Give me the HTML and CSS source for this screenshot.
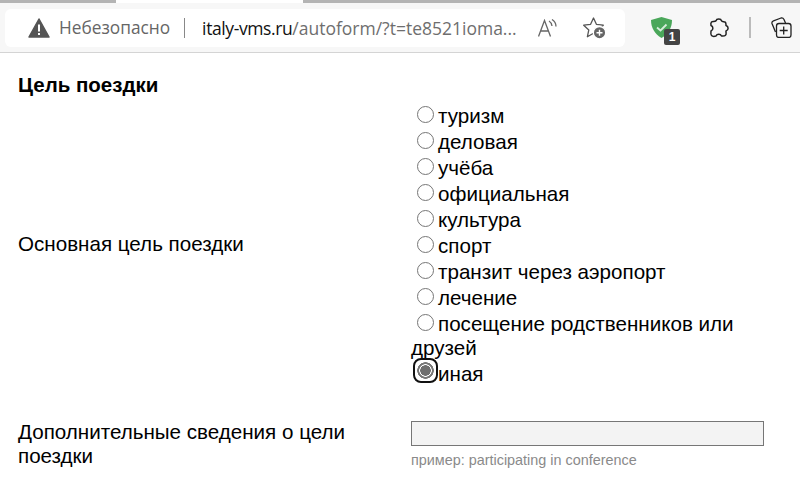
FILE: index.html
```html
<!DOCTYPE html>
<html lang="ru">
<head>
<meta charset="utf-8">
<title>Цель поездки</title>
<link rel="stylesheet" href="styles.css">
</head>
<body>
<header class="toolbar">
  <div class="tabstrip"><span class="tab tab-left"></span><span class="tab tab-right"></span></div>
  <div class="toolrow">
    <div class="address">
      <svg class="warn" width="22" height="20" viewBox="0 0 22 20"><path d="M11 1 L21 19 H1 Z" fill="#555" stroke="#555" stroke-width="1.5" stroke-linejoin="round"/><rect x="10" y="6.5" width="2" height="7" fill="#fff"/><rect x="10" y="15" width="2" height="2" fill="#fff"/></svg>
      <span class="insecure">Небезопасно</span>
      <span class="sep"></span>
      <span class="url"><b class="host">italy-vms.ru</b>/autoform/?t=te8521ioma...</span>
      <svg class="aloud" width="20" height="18" viewBox="0 0 20 18" fill="none" stroke="#666" stroke-width="1.3"><path d="M0.500 17.500 L6.500 1.500 L12.500 17.500 M2.500 12 H10.500"/><path d="M11 2 Q13.500 3.500 14 7 M14 0.500 Q18 3 18 7.500"/></svg>
      <svg class="fav" width="23" height="22" viewBox="0 0 23 22"><path d="M10.500 1 L13.400 7.300 L20.300 8.200 L15.200 12.900 L16.600 19.700 L10.500 16.300 L4.400 19.700 L5.800 12.900 L0.700 8.200 L7.600 7.300 Z" fill="none" stroke="#555" stroke-width="1.300" stroke-linejoin="round"/><circle cx="16.500" cy="15.700" r="6.200" fill="#666" stroke="#fff" stroke-width="1.300"/><path d="M16.500 12.700 V18.700 M13.500 15.700 H19.500" stroke="#fff" stroke-width="1.400"/></svg>
    </div>
    <div class="ext">
      <svg width="21" height="21" viewBox="0 0 21 21"><path d="M10.500 0 L21 3 C21 11 17 17 10.500 21 C4 17 0 11 0 3 Z" fill="#4aa75a"/><path d="M6 10.500 L9.500 13.500 L15.500 7.500" fill="none" stroke="#d6eddb" stroke-width="1.800"/></svg>
      <span class="badge">1</span>
    </div>
    <svg class="puzzle" width="20" height="20" viewBox="0 0 20 20"><path d="M7 2.800 C7.500 0.300 12 0.300 12.500 2.800 C13 4 15 3.500 16 4 C17.500 4.800 16.800 6.500 17 7.500 C19.800 8.500 19.800 12 17 13 C16.800 14.500 17.800 16 16.500 17.200 C15.500 18.300 13.500 17.800 12.500 18 C11.500 15.500 8 15.500 7 18 C5.500 18.500 3.500 18.500 2.500 17.500 C1.500 16.500 1.800 14.500 2 13 C4.500 12 4.500 8.500 2 7.500 C1.800 6.500 1.500 5 2.500 4 C3.500 3.200 6 4 7 2.800 Z" fill="none" stroke="#222" stroke-width="1.500" stroke-linejoin="round"/></svg>
    <span class="tooldiv"></span>
    <svg class="collections" width="21" height="21" viewBox="0 0 21 21" fill="none" stroke="#222" stroke-width="1.300"><path d="M4.500 15 L1 6.500 Q0.500 4.500 2.500 3.800 L10 1 Q12 0.500 13 2.500 L14.500 6"/><rect x="5.500" y="6.500" width="14.500" height="14" rx="2.500"/><path d="M12.700 9.500 V17.500 M8.700 13.500 H16.700"/></svg>
  </div>
</header>
<main class="form">
  <h2 class="section-title">Цель поездки</h2>
  <div class="row row-purpose">
    <div class="label">Основная цель поездки</div>
    <div class="field">
      <label class="opt"><input type="radio" name="p">туризм</label>
      <label class="opt"><input type="radio" name="p">деловая</label>
      <label class="opt"><input type="radio" name="p">учёба</label>
      <label class="opt"><input type="radio" name="p">официальная</label>
      <label class="opt"><input type="radio" name="p">культура</label>
      <label class="opt"><input type="radio" name="p">спорт</label>
      <label class="opt"><input type="radio" name="p">транзит через аэропорт</label>
      <label class="opt"><input type="radio" name="p">лечение</label>
      <label class="opt"><input type="radio" name="p">посещение родственников или друзей</label>
      <label class="opt"><input type="radio" name="p" checked>иная</label>
    </div>
  </div>
  <div class="row row-extra">
    <div class="label">Дополнительные сведения о цели поездки</div>
    <div class="field">
      <div class="fake-input"></div>
      <div class="hint">пример: participating in conference</div>
    </div>
  </div>
</main>
</body>
</html>
```
FILE: styles.css
```css
* { box-sizing: border-box; }
html, body { margin: 0; padding: 0; }
body {
  width: 800px;
  height: 495px;
  overflow: hidden;
  background: #fff;
  font-family: "Liberation Sans", Arial, sans-serif;
  color: #000;
}
.toolbar {
  height: 53px;
  background: #f7f7f7;
  border-bottom: 1px solid #d4d4d4;
}
.tabstrip {
  height: 3px;
  background: #fff;
  display: flex;
  justify-content: space-between;
}
.tab { display: block; height: 3px; background: #b4b4b4; }
.tab-left { width: 116px; }
.tab-right { width: 497px; }
.toolrow {
  display: flex;
  align-items: center;
  height: 49px;
}
.address {
  width: 620px;
  height: 38px;
  margin-left: 5px;
  background: #fff;
  border-radius: 6px;
  display: flex;
  align-items: center;
  padding-left: 23px;
}
.warn { flex: none; }
.insecure { margin-left: 9px; font: 17.300px "Open Sans", sans-serif; color: #666; }
.sep { width: 1px; height: 20px; background: #888; margin: 0 17px 0 14px; }
.url { font: 17.500px "Open Sans", sans-serif; color: #6e6e6e; white-space: nowrap; width: 334px; }
.host { font-weight: 400; color: #111; letter-spacing: -0.400px; }
.aloud { flex: none; margin-left: 2px; }
.fav { flex: none; margin-left: 25px; }
.ext { position: relative; width: 21px; height: 21px; margin-left: 26px; }
.badge {
  position: absolute;
  left: 13px;
  top: 12px;
  width: 16px;
  height: 16px;
  background: #444;
  border-radius: 2px;
  color: #fff;
  font: bold 12px/16px "Liberation Sans", sans-serif;
  text-align: center;
}
.puzzle { flex: none; margin-left: 37px; }
.tooldiv { width: 2px; height: 21px; background: #bbb; margin-left: 20px; }
.collections { flex: none; margin-left: 20px; }
.form { padding: 0 36px 0 18px; }
.section-title {
  margin: 19px 0 0;
  font-size: 20.500px;
  line-height: 26px;
  font-weight: bold;
}
.row { display: grid; grid-template-columns: 393px 353px; align-items: center; }
.row-purpose { margin-top: 6px; }
.row-purpose .label { padding-bottom: 2px; }
.row-extra { margin-top: 34px; align-items: start; }
.label { font-size: 20.600px; line-height: 24px; }
.field { font-size: 20.600px; line-height: 24px; }
.opt { display: block; margin-bottom: 2px; }
.opt:last-child { margin-bottom: 0; }
.opt input {
  appearance: none;
  width: 17px;
  height: 17px;
  margin: 0 4px 0 6px;
  border: 1.500px solid #767676;
  border-radius: 50%;
  background: #fff;
  vertical-align: 0;
}
.opt input:checked {
  width: 25px;
  height: 25px;
  margin: -4px 0 -4px 2px;
  border: 2px solid #111;
  border-radius: 8px;
  background: radial-gradient(circle, #6e6e6e 0 5px, #fff 5.500px 6px, #777 6.500px 8px, #fff 8.500px);
  vertical-align: 2px;
}
.fake-input {
  height: 25px;
  background: #f3f3f3;
  border: 1px solid #767676;
  margin-top: 1px;
}
.hint { font-size: 14.400px; line-height: 16px; margin-top: 6px; color: #8a8a8a; }
```
